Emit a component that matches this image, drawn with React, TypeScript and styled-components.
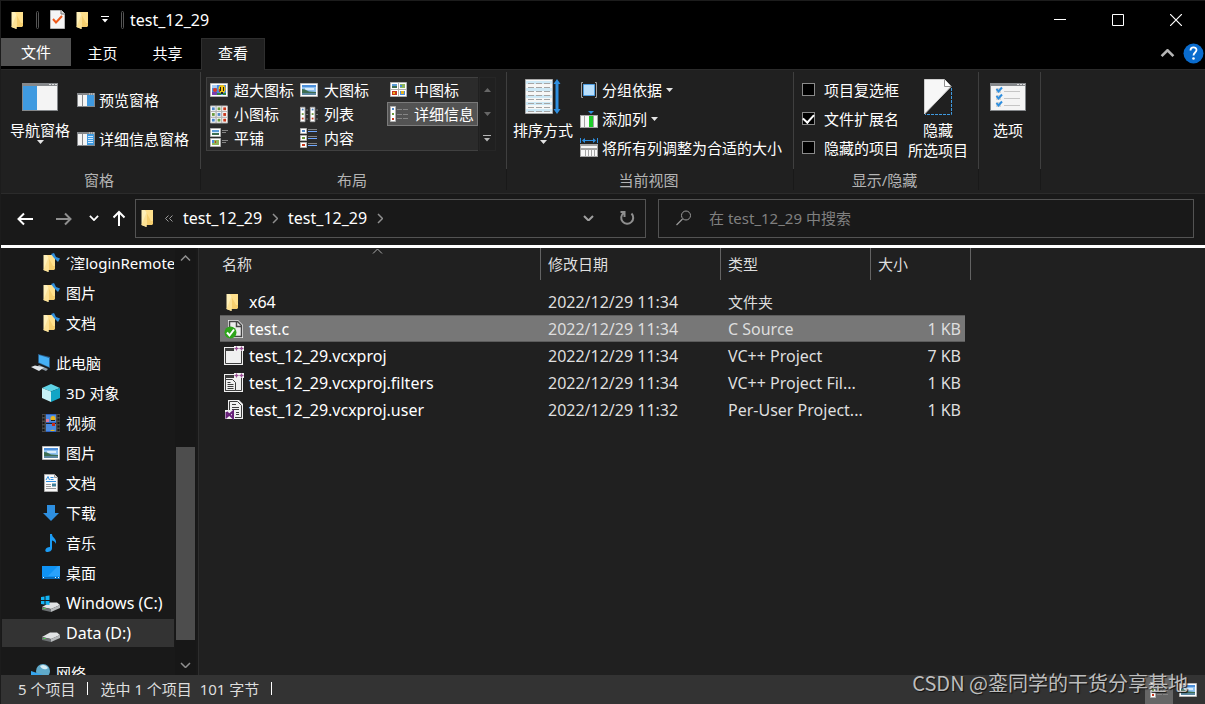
import React from "react";
import styled, { createGlobalStyle, css } from "styled-components";

const Global = createGlobalStyle`
  * { box-sizing: border-box; }
  body { margin: 0; background: #202020; }
  body, button, input {
    font-family: "Noto Sans", "Noto Sans CJK SC", sans-serif;
    font-size: 15px;
    line-height: 20px;
    color: #fff;
  }
  button { background: none; border: 0; padding: 0; margin: 0; white-space: nowrap; }
  svg { display: block; flex: none; }
`;

const Window = styled.div`
  position: relative;
  display: flex;
  flex-direction: column;
  height: 100vh;
  background: #202020;
  border-top: 1px solid #1c1c1c;
  border-left: 1px solid #1c1c1c;
`;

/* Title bar */
const TitleBar = styled.header`
  display: flex;
  align-items: center;
  height: 37px;
  flex: none;
  padding-left: 10px;
  background: #000;
`;
const QuickTools = styled.div`
  display: flex;
  align-items: center;
  gap: 11px;
`;
const Pill = styled.span`
  width: 3px;
  height: 18px;
  border: 1px solid #555;
  border-radius: 2px;
`;
const Title = styled.h1`
  flex: 1;
  margin: 0 0 0 6px;
  font-size: 16px;
  font-weight: 400;
`;
const WindowButton = styled.button`
  display: grid;
  place-items: center;
  width: 58px;
  height: 37px;
`;

/* Tabs */
const TabBar = styled.nav`
  display: flex;
  height: 32px;
  flex: none;
  background: #000;
  border-bottom: 1px solid #2b2b2b;
`;
const Tab = styled.button<{ $kind?: "file" | "active" }>`
  width: 65px;
  height: 31px;
  padding: 0 2px 2px 0;
  ${(p) =>
    p.$kind === "file" &&
    css`
      width: 70px;
      height: 28px;
      padding: 0;
      background: #535353;
    `}
  ${(p) =>
    p.$kind === "active" &&
    css`
      width: 64px;
      height: 32px;
      padding: 0 0 4px;
      background: #202020;
      border: 1px solid #2f2f2f;
      border-bottom: 0;
    `}
`;
const TabTools = styled.div`
  display: flex;
  align-items: center;
  gap: 8px;
  margin-left: auto;
  padding-right: 1px;
`;

/* Ribbon */
const Ribbon = styled.section`
  display: flex;
  flex: none;
  border-bottom: 1px solid #2b2b2b;
`;
const Group = styled.div<{ $w: number }>`
  width: ${(p) => p.$w}px;
  padding: 9px 0 3px;
  background: linear-gradient(#3f3f3f 97px, #191919 97px) right top 2px / 1px 118px no-repeat;
`;
const GroupBody = styled.div<{ $pad: number; $gap?: number }>`
  display: flex;
  gap: ${(p) => p.$gap ?? 8}px;
  height: 91px;
  padding-left: ${(p) => p.$pad}px;
`;
const GroupLabel = styled.div`
  height: 20px;
  padding-right: 4px;
  text-align: center;
  color: #b4b4b4;
`;
const BigButton = styled.button`
  display: flex;
  flex-direction: column;
  align-items: center;
  align-self: flex-start;
`;
const BigIcon = styled.span`
  display: grid;
  place-items: center;
  height: 36px;
  margin-bottom: 5px;
`;
const Stack = styled.div<{ $row: number; $top: number }>`
  display: grid;
  align-content: start;
  grid-auto-rows: ${(p) => p.$row}px;
  margin-top: ${(p) => p.$top}px;
`;
const SmallButton = styled.button`
  display: flex;
  align-items: center;
  gap: 4px;
`;
const Gallery = styled.div`
  display: grid;
  grid-template-columns: 90px 90px 91px;
  grid-auto-rows: 24px;
  align-self: flex-start;
  margin-top: -2px;
  border: 1px solid #404040;
  border-right: 0;
  background: #2b2b2b;
`;
const GalleryItem = styled.button<{ $active?: boolean }>`
  display: flex;
  align-items: center;
  gap: 6px;
  padding-left: ${(p) => (p.$active ? 2 : 3)}px;
  border: ${(p) => (p.$active ? "1px solid #7a7a7a" : "0")};
  background: ${(p) => (p.$active ? "#535353" : "none")};
`;
const GalleryScroll = styled.div`
  display: grid;
  grid-template-rows: 1fr 1fr 1fr;
  width: 17px;
  height: 74px;
  margin-top: -2px;
  border: 1px solid #262626;
`;
const ScrollStep = styled.button`
  display: grid;
  place-items: center;
`;
const CheckLabel = styled.label`
  display: flex;
  align-items: center;
  gap: 9px;
`;
const Check = styled.input`
  appearance: none;
  display: grid;
  place-items: center;
  width: 13px;
  height: 13px;
  margin: 0;
  background: #000;
  border: 1px solid #8a8a8a;
  &:checked::after {
    content: "";
    width: 5px;
    height: 9px;
    margin-top: -2px;
    border: solid #fff;
    border-width: 0 2px 2px 0;
    transform: rotate(42deg);
  }
`;

/* Address row */
const AddressRow = styled.div`
  display: grid;
  grid-template-columns: 134px 511fr 12px 536fr;
  align-items: center;
  flex: none;
  height: 51px;
  padding-right: 11px;
  padding-bottom: 3px;
  background: #191919;
`;
const NavButtons = styled.div`
  display: flex;
  align-items: center;
  padding-left: 16px;
`;
const NavButton = styled.button<{ $w: number }>`
  display: grid;
  justify-content: start;
  align-content: center;
  width: ${(p) => p.$w}px;
  height: 24px;
`;
const AddressBox = styled.div`
  display: flex;
  align-items: center;
  height: 39px;
  padding: 0 10px 0 5px;
  border: 1px solid #535353;
`;
const Crumb = styled.button`
  font-size: 16px;
`;
const CrumbMark = styled.span<{ $w: number }>`
  display: grid;
  place-items: center;
  width: ${(p) => p.$w}px;
`;
const Spacer = styled.span`
  flex: 1;
`;
const SearchBox = styled.label`
  grid-column: 4;
  display: flex;
  align-items: center;
  gap: 17px;
  height: 39px;
  padding-left: 17px;
  border: 1px solid #535353;
`;
const SearchInput = styled.input`
  flex: 1;
  min-width: 0;
  padding: 0;
  background: none;
  border: 0;
  outline: 0;
  &::placeholder { color: #808080; opacity: 1; }
`;

/* Body */
const Body = styled.main`
  display: flex;
  flex: 1;
  min-height: 0;
  border-top: 3px solid #fff;
`;
const Sidebar = styled.aside`
  display: flex;
  flex: none;
  width: 198px;
  background: #191919;
  border-right: 1px solid #2d2d2d;
`;
const Tree = styled.ul`
  width: 174px;
  margin: 0;
  padding: 0;
  list-style: none;
  overflow: hidden;
`;
const TreeItem = styled.li<{ $root?: boolean; $active?: boolean; $latin?: boolean }>`
  margin-top: ${(p) => (p.$root ? 10 : 0)}px;
  padding: 1px 1px 1px 1px;
  font-size: ${(p) => (p.$latin ? 16 : 15)}px;
  > a {
    display: flex;
    align-items: center;
    gap: 5px;
    height: 28px;
    padding-left: ${(p) => (p.$root ? 29 : 39)}px;
    background: ${(p) => (p.$active ? "#333" : "none")};
    color: #fff;
    text-decoration: none;
    white-space: nowrap;
    overflow: hidden;
  }
`;
const Scrollbar = styled.div`
  display: flex;
  flex-direction: column;
  align-items: center;
  width: 21px;
  padding: 7px 0;
  background: #171717;
`;
const Track = styled.div`
  display: flex;
  flex-direction: column;
  flex: 1;
  width: 19px;
  margin: 8px 0;
  &::before { content: ""; flex: 177; }
  &::after { content: ""; flex: 13; }
`;
const Thumb = styled.div`
  flex: 193;
  background: #4d4d4d;
`;
const Files = styled.section`
  position: relative;
  flex: 1;
  min-width: 0;
  padding-left: 21px;
  overflow: hidden;
`;
const SortMark = styled.span`
  position: absolute;
  top: 0;
  left: 173px;
`;
const FileTable = styled.table`
  table-layout: fixed;
  width: 751px;
  border-spacing: 0;
`;
const Th = styled.th<{ $name?: boolean; $line?: boolean }>`
  height: 32px;
  padding: 0 0 0 ${(p) => (p.$name ? 2 : 7)}px;
  border-right: ${(p) => (p.$line ? "1px solid #636363" : "0")};
  font-weight: 400;
  text-align: left;
  color: #dedede;
`;
const Gap = styled.tr`
  height: 8px;
`;
const Td = styled.td<{ $dim?: boolean; $num?: boolean; $active?: boolean; $cjk?: boolean }>`
  height: 27px;
  padding: 0 4px 0 7px;
  border: 0 solid #5c5c5c;
  font-size: ${(p) => (p.$cjk ? 15 : 16)}px;
  color: ${(p) => (p.$dim ? "#dedede" : "#fff")};
  text-align: ${(p) => (p.$num ? "right" : "left")};
  white-space: nowrap;
  overflow: hidden;
  text-overflow: ellipsis;
  ${(p) =>
    p.$active &&
    css`
      background: #777;
      border-width: 1px 0;
    `}
`;
const FileName = styled.span`
  display: flex;
  align-items: center;
  gap: 5px;
  margin-left: -3px;
`;

/* Status bar */
const StatusBar = styled.footer`
  display: flex;
  align-items: center;
  flex: none;
  height: 29px;
  padding: 0 8px 0 17px;
  background: #333;
  color: #dedede;
`;
const StatusText = styled.div`
  display: flex;
  align-items: center;
  padding-bottom: 2px;
`;
const Divider = styled.span`
  width: 1px;
  height: 13px;
  margin: 0 12px;
  background: #fff;
`;
const ViewButton = styled.button<{ $active?: boolean }>`
  display: grid;
  place-items: center;
  width: ${(p) => (p.$active ? 28 : 18)}px;
  height: 29px;
  margin-left: ${(p) => (p.$active ? 0 : 6)}px;
  background: ${(p) => (p.$active ? "#666" : "none")};
`;
const Watermark = styled.span`
  position: absolute;
  right: 17px;
  bottom: 7px;
  font-family: "Noto Sans CJK SC", sans-serif;
  font-size: 20px;
  line-height: 28px;
  color: #bdbdbd;
  text-shadow: 1px 1px 1px #111;
  pointer-events: none;
`;

/* Icons */
const FolderShape = () => (
  <g>
    <path d="M6 2h8v14l-1 1H6z" fill="#f6cf6f" />
    <path d="M6 2h8v11h-2z" fill="#ffe08c" />
    <path d="M2.500 2H6l1.500 2.500V19l-5-2z" fill="#fff0b8" />
    <path d="M7.500 4.500V19l-5-2z" fill="#fde294" />
  </g>
);
const Folder = ({ pinned = false }: { pinned?: boolean }) => (
  <svg width="20" height="20" viewBox="0 0 20 20">
    <FolderShape />
    {pinned && <path d="M10 1l3-1 2 4 4 1.500L17 9l-4-4z" fill="#2f8fdc" />}
  </svg>
);
const SmallFolder = () => (
  <svg width="14" height="20" viewBox="2 0 14 20">
    <FolderShape />
  </svg>
);
const CheckedDoc = () => (
  <svg width="15" height="19" viewBox="0 0 15 19">
    <path d="M.5.500h11l3 3v15H.5z" fill="#f5f5f5" stroke="#b5b5b5" />
    <path d="M11 0v4h4" fill="#ddd" stroke="#777" />
    <path d="M3 9l3 3.500L12 6" fill="none" stroke="#ee5a1c" strokeWidth="2" />
  </svg>
);
const Caret = ({ color = "#e4e4e4", up = false }: { color?: string; up?: boolean }) => (
  <svg width="7" height="4" viewBox="0 0 7 4">
    <path d={up ? "M0 4h7L3.500 0z" : "M0 0h7L3.500 4z"} fill={color} />
  </svg>
);
const BarCaret = ({ color = "#fff" }: { color?: string }) => (
  <svg width="9" height="9" viewBox="0 0 9 9">
    <path d="M0 1h8v1H0zM1 4h6L4 7.500z" fill={color} />
  </svg>
);
const Chevron = ({ dir, size = 9, color = "#8f8f8f", w = 1.5 }: { dir: "up" | "down" | "right"; size?: number; color?: string; w?: number }) => (
  <svg
    width={dir === "right" ? size / 2 + 2 : size + 2}
    height={dir === "right" ? size + 2 : size / 2 + 2}
    viewBox={dir === "right" ? "0 0 6.500 11" : "0 0 11 6.500"}
  >
    <path
      d={dir === "up" ? "M1 5.500L5.500 1 10 5.500" : dir === "down" ? "M1 1l4.500 4.500L10 1" : "M1 1l4.500 4.500L1 10"}
      fill="none"
      stroke={color}
      strokeWidth={w}
    />
  </svg>
);
const NavPane = () => (
  <svg width="36" height="28" viewBox="0 0 36 28">
    <path d="M0 0h36v28H0z" fill="#85888b" />
    <path d="M27 1h2v1h-2zM30 1h2v1h-2zM33 1h2v1h-2z" fill="#ddd" />
    <path d="M1 3h14v24H1z" fill="#3f9ae0" />
    <path d="M15 3h20v24H15z" fill="#f4f4f4" />
  </svg>
);
const PaneIcon = ({ lines = false }: { lines?: boolean }) => (
  <svg width="18" height="14" viewBox="0 0 18 14">
    <path d="M0 0h18v14H0z" fill="#85888b" />
    <path d="M1 2h4v11H1zM6 2h4v11H6z" fill="#f4f4f4" />
    <path d="M10 2h7v11h-7z" fill="#3f9ae0" />
    <path d="M12 .500h1v1h-1zM14 .500h1v1h-1zM16 .500h1v1h-1z" fill="#ddd" />
    {lines && <path d="M11 4.500h5M11 6.500h5M11 8.500h5M11 10.500h5" stroke="#cfe8ff" />}
  </svg>
);
const Landscape = () => (
  <svg width="18" height="14" viewBox="0 0 18 14">
    <path d="M.5.500h17v13H.5z" fill="#fff" stroke="#b5b5b5" />
    <path d="M2 2h14v10H2z" fill="#8ec1f0" />
    <path d="M2 2h14v2H2z" fill="#4c8fdb" />
    <path d="M5 5h9v2H5z" fill="#d9ecfb" />
    <path d="M2 6l3 .500L9 8.500l7 .500v1H2z" fill="#3d6e52" />
    <path d="M2 10h14v2H2z" fill="#5b87a0" />
  </svg>
);
const Balloons = () => (
  <svg width="18" height="14" viewBox="0 0 18 14">
    <path d="M.5.500h17v13H.5z" fill="#fff" stroke="#b5b5b5" />
    <path d="M2 2h14v10H2z" fill="#4b8be0" />
    <path d="M2 2h5v3H2z" fill="#a9cdf5" />
    <circle cx="5" cy="7" r="2" fill="#e03c22" />
    <path d="M2 9h5v3H2z" fill="#7a3fae" />
    <ellipse cx="12" cy="6" rx="3.500" ry="4" fill="#f4c20d" />
    <path d="M10 4h1v4h-1zM13 4h1v4h-1zM11 9h2v2h-2z" fill="#222" />
    <path d="M7 10h4v2H7zM13 10h3v2h-3z" fill="#2f8a3b" />
    <path d="M9 6h1v3H9z" fill="#c8381c" />
  </svg>
);
const Tile = ({ x, y, s, c }: { x: number; y: number; s: number; c: string }) => (
  <g>
    <path d={`M${x + 0.5} ${y + 0.5}h${s - 1}v${s - 1}h${1 - s}z`} fill="#fff" stroke="#b0b0b0" />
    <path d={`M${x + 2} ${y + 2}h${s - 4}v${s - 4}h${4 - s}z`} fill={c} />
  </g>
);
const blue = "#4c86c8";
const green = "#6a9a3c";
const red = "#c8381c";
const MediumIcons = () => (
  <svg width="18" height="16" viewBox="0 0 18 16">
    <path d="M.5.500h16v14H.5z" fill="#fff" stroke="#b0b0b0" />
    <path d="M8.500 0v15M0 7.500h17" stroke="#b0b0b0" />
    <path d="M2 2h5v4H2z" fill="#5b9bd8" />
    <path d="M2 4h5v2H2z" fill="#3d6e52" />
    <path d="M10 2h5v4h-5z" fill="#8fb65c" />
    <path d="M10 3h2v2h-2z" fill="#4b8be0" />
    <path d="M2 9h5v4H2z" fill="#c8381c" />
    <path d="M3 10h2v2H3z" fill="#f0b020" />
    <path d="M10 9h5v4h-5z" fill="#4b8be0" />
    <path d="M11 9h3v3h-3z" fill="#e0b020" />
  </svg>
);
const SmallIcons = () => (
  <svg width="18" height="20" viewBox="1 0 19 20">
    {[0, 6, 12].map((y, r) =>
      [0, 6, 12].map((x, c) => <Tile key={`${x}-${y}`} x={x + 1} y={y + 1} s={7} c={[blue, green, red][c === 2 ? 2 : (c + r) % 2]} />)
    )}
  </svg>
);
const ListIcon = () => (
  <svg width="18" height="17" viewBox="0 0 20 17">
    {[0, 11].map((x) => (
      <g key={x}>
        <path d={`M${x + 0.5}.500h5v16h-5z`} fill="#fff" stroke="#b0b0b0" />
        <path d={`M${x + 2} 2h2v2h-2z`} fill={blue} />
        <path d={`M${x + 2} 7h2v2h-2z`} fill={green} />
        <path d={`M${x + 2} 12h2v2h-2z`} fill={red} />
        <path d={`M${x + 7} 3.500h2M${x + 7} 8.500h2M${x + 7} 13.500h2`} stroke="#8a8a8a" />
      </g>
    ))}
  </svg>
);
const DetailsIcon = () => (
  <svg width="18" height="16" viewBox="0 0 18 16">
    <path d="M.5.500h5v15h-5z" fill="#fff" stroke="#b0b0b0" />
    <path d="M2 2h2v2H2z" fill={blue} />
    <path d="M2 7h2v2H2z" fill={green} />
    <path d="M2 12h2v2H2z" fill={red} />
    <path d="M7 3.500h5M13 3.500h5M7 8.500h5M13 8.500h5M7 12.500h5M13 12.500h5" stroke="#858585" />
  </svg>
);
const TilesIcon = () => (
  <svg width="18" height="20" viewBox="0 0 18 20">
    <path d="M.5.500h10v8H.5zM.5 10.500h10v8H.5z" fill="#fff" stroke="#b0b0b0" />
    <path d="M2 2h7v5H2z" fill="#5b9bd8" />
    <path d="M2 4h7v1H2z" fill="#d9ecfb" />
    <path d="M2 5h7v2H2z" fill="#3d6e52" />
    <path d="M2 12h7v5H2z" fill="#8fb65c" />
    <path d="M2 12h2v3H2z" fill="#4b8be0" />
    <path d="M5 13h1v2H5z" fill={red} />
    <path d="M12 2.500h6M12 4.500h4M12 12.500h6M12 14.500h4" stroke="#858585" />
  </svg>
);
const ContentIcon = () => (
  <svg width="18" height="20" viewBox="0 0 18 20">
    {[0, 7, 14].map((y, i) => (
      <g key={y}>
        <path d={`M.5 ${y + 0.5}h6v5h-6z`} fill="#fff" stroke="#b0b0b0" />
        <path d={`M2 ${y + 2}h3v2h-3z`} fill={[blue, green, red][i]} />
        <path d={`M8 ${y + 1.5}h9`} stroke="#858585" />
        <path d={`M8 ${y + 3.5}h9`} stroke="#6fa8ff" />
      </g>
    ))}
  </svg>
);
const SortIcon = () => (
  <svg width="36" height="36" viewBox="0 0 36 36">
    <path d="M.5.500h27v34H.5z" fill="#f7f7f7" stroke="#a9a9a9" />
    {[3, 10, 17, 24, 31].map((y) => (
      <path key={y} d={`M1 ${y - 1}h26v3H1z`} fill="#cde9f7" />
    ))}
    {[4, 8, 12, 16, 20, 24, 28, 32].map((y) => (
      <path key={y} d={`M3 ${y}.500h6M11 ${y}.500h6M19 ${y}.500h6`} stroke="#a5a5a5" />
    ))}
    <path d="M32 0l3.500 5h-2v25h2L32 35l-3.500-5h2V5h-2z" fill="#2e8fe0" />
  </svg>
);
const GroupIcon = () => (
  <svg width="18" height="18" viewBox="0 0 18 18">
    <path d="M3 1.500H1.500v15H3M15 1.500h1.500v15H15" fill="none" stroke="#a0a0a0" />
    <path d="M3.500 3.500h11v11h-11z" fill="#b9dffb" stroke="#4f9fe2" />
  </svg>
);
const AddColumnIcon = () => (
  <svg width="18" height="18" viewBox="0 0 18 18">
    <path d="M8 1h6l-3 3z" fill="#2e8fe0" />
    <path d="M0 5h18v13H0z" fill="#a4a4a4" />
    <path d="M1 6h3v11H1zM5 6h4v11H5zM14 6h3v11h-3z" fill="#f7f7f7" />
    <path d="M9 6h4v11H9z" fill="#1fcb2b" />
  </svg>
);
const FitColumnsIcon = () => (
  <svg width="18" height="19" viewBox="0 0 18 19">
    <path d="M.5 0v5M17.500 0v5M3 2.500h12" stroke="#2e8fe0" />
    <path d="M2 2.500L5 0v5zM16 2.500L13 0v5z" fill="#2e8fe0" />
    <path d="M0 6h18v13H0z" fill="#a4a4a4" />
    <path d="M1 8h16v2H1zM1 12h4v6H1zM6 12h2v6H6zM9 12h2v6H9zM12 12h2v6h-2zM15 12h2v6h-2z" fill="#f7f7f7" />
  </svg>
);
const HideIcon = () => (
  <svg width="28" height="36" viewBox="0 0 28 36">
    <path d="M.5 35V.500h20L27 7.500z" fill="#f7f7f7" stroke="#cfcfcf" />
    <path d="M20.500.500v7H27" fill="#fff" stroke="#8f8f8f" />
    <path d="M27.500 9v26.500H1" fill="none" stroke="#3f9ae0" strokeDasharray="3 1" />
  </svg>
);
const OptionsIcon = () => (
  <svg width="36" height="28" viewBox="0 0 36 28">
    <path d="M0 0h36v28H0z" fill="#85888b" />
    <path d="M27 1h2v1h-2zM30 1h2v1h-2zM33 1h2v1h-2z" fill="#ddd" />
    <path d="M1 3h34v24H1z" fill="#f4f4f4" />
    {[5, 12, 19].map((y) => (
      <g key={y}>
        <path d={`M6 ${y}h5v5h-5z`} fill="#d5d5d5" />
        <path d={`M6.500 ${y + 1}l2 2.500 3.500-4`} fill="none" stroke="#2e8fe0" strokeWidth="2" />
        <path d={`M14 ${y + 3.5}h16`} stroke="#c5c5c5" />
      </g>
    ))}
  </svg>
);
const Arrow = ({ kind, color = "#fff" }: { kind: "left" | "right" | "up"; color?: string }) => (
  <svg width="16" height="16" viewBox="0 0 16 16">
    <path
      d={
        kind === "left"
          ? "M16 9H1.500M7 3.500L1.500 9 7 14.500"
          : kind === "right"
            ? "M0 9h14.500M9 3.500L14.500 9 9 14.500"
            : "M6 16V2M.5 7.500L6 2l5.500 5.500"
      }
      fill="none"
      stroke={color}
      strokeWidth="2"
    />
  </svg>
);
const Back2 = () => (
  <svg width="8" height="7" viewBox="0 0 8 7">
    <path d="M3.500.500l-3 3 3 3M7.500.500l-3 3 3 3" fill="none" stroke="#9a9a9a" />
  </svg>
);
const Refresh = () => (
  <svg width="16" height="16" viewBox="0 0 16 16">
    <path d="M12.500 3.500a6 6 0 1 1-8-.500M1.500 2h4v5" fill="none" stroke="#8f8f8f" strokeWidth="2" />
  </svg>
);
const SearchIcon = () => (
  <svg width="16" height="16" viewBox="0 0 16 16">
    <circle cx="10" cy="5.500" r="4.500" fill="none" stroke="#9a9a9a" />
    <path d="M6.500 9L.5 15" stroke="#9a9a9a" strokeWidth="1.200" />
  </svg>
);
const ThisPC = () => (
  <svg width="20" height="20" viewBox="0 0 20 20">
    <path d="M7 1l12 3v11L7 10z" fill="#2a5f8c" />
    <path d="M8 2l10 3v9L8 9.500z" fill="#46b0f5" />
    <path d="M8 12l9 4-2 2-9-4z" fill="#8d9aa5" />
    <path d="M0 14l4-1.500 9 2L8 18z" fill="#dfe4e8" />
  </svg>
);
const Cube = () => (
  <svg width="20" height="20" viewBox="0 0 20 20">
    <path d="M10 1l9 4-9 3.500L1 5z" fill="#5fd3e6" />
    <path d="M1 5l9 3.500V19l-9-4z" fill="#c6f1f6" />
    <path d="M19 5l-9 3.500V19l9-4z" fill="#12a5c6" />
  </svg>
);
const Film = () => (
  <svg width="20" height="20" viewBox="0 0 20 20">
    <path d="M1 1h18v18H1z" fill="#4a4a4a" />
    <path d="M2.500 2v16M17.500 2v16" stroke="#151515" strokeWidth="2" strokeDasharray="2 1.500" />
    <path d="M5 1h10v18H5z" fill="#2f62c0" />
    <path d="M5 2h10v7H5zM5 11h10v7H5z" fill="#4b8be0" />
    <path d="M5 6h3v3H5z" fill="#e07a9a" />
    <circle cx="12" cy="5.500" r="2.500" fill="#e9b51a" />
    <path d="M10 7h4v1h-4zM5 10h10v1H5z" fill="#222" />
    <path d="M11 10h3v3h-3z" fill="#c42b1c" />
    <path d="M9 18a3 3 0 0 1 5 0z" fill="#e9b51a" />
  </svg>
);
const DocIcon = () => (
  <svg width="20" height="20" viewBox="0 0 20 20">
    <path d="M3.500 1.500h10l3 3v14h-13z" fill="#fafafa" stroke="#aaa" />
    <path d="M13.500 1.500v3h3" fill="#ddd" stroke="#999" />
    <path d="M5 7l2-3.500L8.500 7M9.500 4.500h3M9.500 6.500h3M5 8.500h10" fill="none" stroke="#2e8fe0" />
    <path d="M5 11.500h5M5 13.500h5M5 15.500h10" stroke="#999" />
    <path d="M11 10.500h4v3h-4z" fill="#3f7f9a" />
  </svg>
);
const Download = () => (
  <svg width="20" height="20" viewBox="0 0 20 20">
    <path d="M6 2h8v8h4l-8 8-8-8h4z" fill="#2e8fe0" />
  </svg>
);
const Music = () => (
  <svg width="20" height="20" viewBox="0 0 20 20">
    <path d="M9 1h2c0 4 5 4 4 10-.500-2-2-3-4-3.500V15c0 3-2.500 4-5 4-3 0-2-5 3-5z" fill="#1b9cf5" />
  </svg>
);
const Desktop = () => (
  <svg width="20" height="20" viewBox="0 0 20 20">
    <path d="M1 3h18v13H1z" fill="#0f93f5" />
    <path d="M19 3v10H7L17 3z" fill="#2aa2fc" />
    <path d="M1 14h18v2H1z" fill="#0b6dbb" />
    <path d="M2 14.500h1M14 14.500h1M17 14.500h1" stroke="#e8f5ff" />
  </svg>
);
const Drive = ({ win = false }: { win?: boolean }) => (
  <svg width="20" height="20" viewBox="0 0 20 20">
    <path d="M1 14l8-4.500h7L19 12l-9 4z" fill="#e1e3e5" />
    <path d="M1 14l9 2v3l-9-2z" fill="#6d7174" />
    <path d="M10 16l9-4v3l-9 4z" fill="#b7babc" />
    <path d="M2.500 15.500h2" stroke="#4ce04c" />
    {win && <path d="M0 4l3.500-.500V7H0zM4.500 3L8.500 2.500V7h-4zM0 8h3.500v3.500L0 11zM4.500 8h4v4l-4-.500z" fill="#12b4f5" />}
  </svg>
);
const Picture = () => (
  <svg width="20" height="14" viewBox="-1 0 20 14">
    <Landscape />
  </svg>
);
const Network = () => (
  <svg width="20" height="20" viewBox="0 0 20 20">
    <circle cx="12" cy="8" r="7" fill="#5fa9c9" />
    <path d="M9 3c3-2 6-1 8 2-2 2-6 2-8-2z" fill="#d5edf5" />
    <path d="M0 8l12 4v8L0 17z" fill="#35a5ee" />
  </svg>
);
const CSource = () => (
  <svg width="20" height="20" viewBox="0 0 20 20">
    <path d="M4 1h10l5 5v13H4z" fill="#f2f2f2" />
    <path d="M5.500 2.500h8l4 4v11h-12z" fill="#ececec" stroke="#454545" strokeWidth="1.500" />
    <path d="M12.500 3v4.500H17" fill="none" stroke="#454545" strokeWidth="1.500" />
    <circle cx="6.500" cy="13.500" r="6" fill="#2fa51c" />
    <path d="M3 13.500l2.500 3 4.500-6" fill="none" stroke="#fff" strokeWidth="2" />
  </svg>
);
const PlusPlus = () => (
  <g>
    <path d="M10 0h10v5H10z" fill="#f0f0f0" />
    <path d="M10.500 2.500h4M12.500 .500v4M15.500 2.500h4M17.500 .500v4" stroke="#9b4f96" />
    <path d="M11.500 1.500h2v2h-2zM16.500 1.500h2v2h-2z" fill="#9b4f96" />
  </g>
);
const ProjIcon = ({ filters = false }: { filters?: boolean }) => (
  <svg width="20" height="20" viewBox="0 0 20 20">
    <path d="M0 1h19v18H0z" fill="#f0f0f0" />
    <path d="M1.500 2.500h16v15h-16z" fill="#f0f0f0" stroke="#3d3d3d" />
    <path d="M1 2h17v3H1z" fill="#3d3d3d" />
    {filters && (
      <g>
        <path d="M1.500 6.500h7l3 3v8h-10z" fill="#f0f0f0" stroke="#3d3d3d" />
        <path d="M3.500 9.500h3M3.500 11.500h6M3.500 13.500h6M3.500 15.500h6" stroke="#3d3d3d" />
      </g>
    )}
    <PlusPlus />
  </svg>
);
const UserIcon = () => (
  <svg width="20" height="20" viewBox="0 0 20 20">
    <path d="M4 0h11l4 4v15H4z" fill="#f0f0f0" />
    <path d="M5.500 1.500h8l4 4v12h-12z" fill="#f0f0f0" stroke="#3d3d3d" />
    <path d="M8 4.500h4M8 7.500h7M8 9.500h7M12 12.500h3M12 14.500h3" stroke="#3d3d3d" />
    <path d="M1 10h10v9H1z" fill="#f0f0f0" />
    <path d="M2.500 12v5L9 11.500v6.500L2.500 12" fill="none" stroke="#68217a" strokeWidth="2" />
  </svg>
);

type TreeRow = { label: string; icon: React.ReactNode; root?: boolean; active?: boolean; latin?: boolean };
const tree: TreeRow[] = [
  { label: "´漥loginRemote", icon: <Folder pinned /> },
  { label: "图片", icon: <Folder pinned /> },
  { label: "文档", icon: <Folder pinned /> },
  { label: "此电脑", icon: <ThisPC />, root: true },
  { label: "3D 对象", icon: <Cube /> },
  { label: "视频", icon: <Film /> },
  { label: "图片", icon: <Picture /> },
  { label: "文档", icon: <DocIcon /> },
  { label: "下载", icon: <Download /> },
  { label: "音乐", icon: <Music /> },
  { label: "桌面", icon: <Desktop /> },
  { label: "Windows (C:)", icon: <Drive win />, latin: true },
  { label: "Data (D:)", icon: <Drive />, active: true, latin: true },
  { label: "网络", icon: <Network />, root: true },
];

const files = [
  { name: "x64", date: "2022/12/29 11:34", type: "文件夹", cjk: true, size: "", icon: <Folder /> },
  { name: "test.c", date: "2022/12/29 11:34", type: "C Source", size: "1 KB", icon: <CSource />, active: true },
  { name: "test_12_29.vcxproj", date: "2022/12/29 11:34", type: "VC++ Project", size: "7 KB", icon: <ProjIcon /> },
  { name: "test_12_29.vcxproj.filters", date: "2022/12/29 11:34", type: "VC++ Project Fil...", size: "1 KB", icon: <ProjIcon filters /> },
  { name: "test_12_29.vcxproj.user", date: "2022/12/29 11:32", type: "Per-User Project...", size: "1 KB", icon: <UserIcon /> },
];

const layouts = [
  { label: "超大图标", icon: <Balloons /> },
  { label: "大图标", icon: <Landscape /> },
  { label: "中图标", icon: <MediumIcons /> },
  { label: "小图标", icon: <SmallIcons /> },
  { label: "列表", icon: <ListIcon /> },
  { label: "详细信息", icon: <DetailsIcon />, active: true },
  { label: "平铺", icon: <TilesIcon /> },
  { label: "内容", icon: <ContentIcon /> },
];

export default function App() {
  return (
    <Window>
      <Global />
      <TitleBar>
        <QuickTools>
          <SmallFolder />
          <Pill />
          <CheckedDoc />
          <SmallFolder />
          <BarCaret />
          <Pill />
        </QuickTools>
        <Title>test_12_29</Title>
        <WindowButton aria-label="最小化">
          <svg width="12" height="12"><path d="M0 5.500h12" stroke="#fff" /></svg>
        </WindowButton>
        <WindowButton aria-label="最大化">
          <svg width="12" height="12"><path d="M.5.500h11v11H.5z" fill="none" stroke="#fff" /></svg>
        </WindowButton>
        <WindowButton aria-label="关闭">
          <svg width="12" height="12"><path d="M0 0l12 12M12 0L0 12" stroke="#fff" strokeWidth="1.200" /></svg>
        </WindowButton>
      </TitleBar>

      <TabBar>
        <Tab $kind="file">文件</Tab>
        <Tab>主页</Tab>
        <Tab>共享</Tab>
        <Tab $kind="active">查看</Tab>
        <TabTools>
          <Chevron dir="up" size={13} color="#b5b5b5" w={2} />
          <svg width="21" height="21" viewBox="0 0 21 21">
            <circle cx="10.500" cy="10.500" r="10" fill="#0a6cce" />
            <path d="M7.500 7.500c0-4 6-4 6-.500 0 2.500-3 2.500-3 5.500" fill="none" stroke="#fff" strokeWidth="1.800" />
            <circle cx="10.500" cy="15.500" r="1.300" fill="#fff" />
          </svg>
        </TabTools>
      </TabBar>

      <Ribbon>
        <Group $w={200}>
          <GroupBody $pad={9} $gap={7}>
            <BigButton>
              <BigIcon><NavPane /></BigIcon>
              导航窗格
              <Caret />
            </BigButton>
            <Stack $row={39} $top={1}>
              <SmallButton><PaneIcon />预览窗格</SmallButton>
              <SmallButton><PaneIcon lines />详细信息窗格</SmallButton>
            </Stack>
          </GroupBody>
          <GroupLabel>窗格</GroupLabel>
        </Group>

        <Group $w={306}>
          <GroupBody $pad={5} $gap={1}>
            <Gallery>
              {layouts.map((l) => (
                <GalleryItem key={l.label} $active={l.active}>{l.icon}{l.label}</GalleryItem>
              ))}
            </Gallery>
            <GalleryScroll>
              <ScrollStep aria-label="向上"><Caret up color="#666" /></ScrollStep>
              <ScrollStep aria-label="向下"><Caret color="#666" /></ScrollStep>
              <ScrollStep aria-label="更多"><BarCaret color="#b5b5b5" /></ScrollStep>
            </GalleryScroll>
          </GroupBody>
          <GroupLabel>布局</GroupLabel>
        </Group>

        <Group $w={287}>
          <GroupBody $pad={6} $gap={7}>
            <BigButton>
              <BigIcon><SortIcon /></BigIcon>
              排序方式
              <Caret />
            </BigButton>
            <Stack $row={29} $top={-4}>
              <SmallButton><GroupIcon />分组依据<Caret /></SmallButton>
              <SmallButton><AddColumnIcon />添加列<Caret /></SmallButton>
              <SmallButton><FitColumnsIcon />将所有列调整为合适的大小</SmallButton>
            </Stack>
          </GroupBody>
          <GroupLabel>当前视图</GroupLabel>
        </Group>

        <Group $w={185}>
          <GroupBody $pad={8} $gap={9}>
            <Stack $row={29} $top={-4}>
              <CheckLabel><Check type="checkbox" />项目复选框</CheckLabel>
              <CheckLabel><Check type="checkbox" defaultChecked />文件扩展名</CheckLabel>
              <CheckLabel><Check type="checkbox" />隐藏的项目</CheckLabel>
            </Stack>
            <BigButton>
              <BigIcon><HideIcon /></BigIcon>
              <span>隐藏</span>
              <span>所选项目</span>
            </BigButton>
          </GroupBody>
          <GroupLabel>显示/隐藏</GroupLabel>
        </Group>

        <Group $w={62}>
          <GroupBody $pad={11}>
            <BigButton>
              <BigIcon><OptionsIcon /></BigIcon>
              选项
            </BigButton>
          </GroupBody>
        </Group>
      </Ribbon>

      <AddressRow>
        <NavButtons>
          <NavButton $w={39} aria-label="后退"><Arrow kind="left" /></NavButton>
          <NavButton $w={33} aria-label="前进"><Arrow kind="right" color="#8f8f8f" /></NavButton>
          <NavButton $w={24} aria-label="最近"><Chevron dir="down" size={8} color="#fff" w={2} /></NavButton>
          <NavButton $w={16} aria-label="向上"><Arrow kind="up" /></NavButton>
        </NavButtons>
        <AddressBox>
          <SmallFolder />
          <CrumbMark $w={28}><Back2 /></CrumbMark>
          <Crumb>test_12_29</Crumb>
          <CrumbMark $w={26}><Chevron dir="right" /></CrumbMark>
          <Crumb>test_12_29</Crumb>
          <CrumbMark $w={26}><Chevron dir="right" /></CrumbMark>
          <Spacer />
          <CrumbMark $w={62}><Chevron dir="down" color="#a0a0a0" w={2} /></CrumbMark>
          <Refresh />
        </AddressBox>
        <SearchBox>
          <SearchIcon />
          <SearchInput type="text" placeholder="在 test_12_29 中搜索" aria-label="搜索" />
        </SearchBox>
      </AddressRow>

      <Body>
        <Sidebar>
          <Tree>
            {tree.map((t, i) => (
              <TreeItem key={i} $root={t.root} $active={t.active} $latin={t.latin}>
                <a href="#">{t.icon}{t.label}</a>
              </TreeItem>
            ))}
          </Tree>
          <Scrollbar>
            <Chevron dir="up" w={1.5} />
            <Track><Thumb /></Track>
            <Chevron dir="down" w={1.5} />
          </Scrollbar>
        </Sidebar>
        <Files>
          <SortMark><Chevron dir="up" w={1} color="#aaa" /></SortMark>
          <FileTable>
            <colgroup>
              <col width="321" /><col width="180" /><col width="150" /><col width="94" /><col width="6" />
            </colgroup>
            <thead>
              <tr>
                <Th $name $line>名称</Th>
                <Th $line>修改日期</Th>
                <Th $line>类型</Th>
                <Th>大小</Th>
                <Th $line />
              </tr>
            </thead>
            <tbody>
              <Gap />
              {files.map((f) => (
                <tr key={f.name}>
                  <Td $active={f.active}><FileName>{f.icon}{f.name}</FileName></Td>
                  <Td $dim $active={f.active}>{f.date}</Td>
                  <Td $dim $active={f.active} $cjk={f.cjk}>{f.type}</Td>
                  <Td $dim $num $active={f.active}>{f.size}</Td>
                </tr>
              ))}
            </tbody>
          </FileTable>
        </Files>
      </Body>

      <StatusBar>
        <StatusText>
          5 个项目
          <Divider />
          <span>选中 1 个项目&nbsp; 101 字节</span>
          <Divider />
        </StatusText>
        <Spacer />
        <ViewButton $active aria-label="详细信息"><DetailsIcon /></ViewButton>
        <ViewButton aria-label="大图标"><Landscape /></ViewButton>
      </StatusBar>
      <Watermark>CSDN @銮同学的干货分享基地</Watermark>
    </Window>
  );
}
